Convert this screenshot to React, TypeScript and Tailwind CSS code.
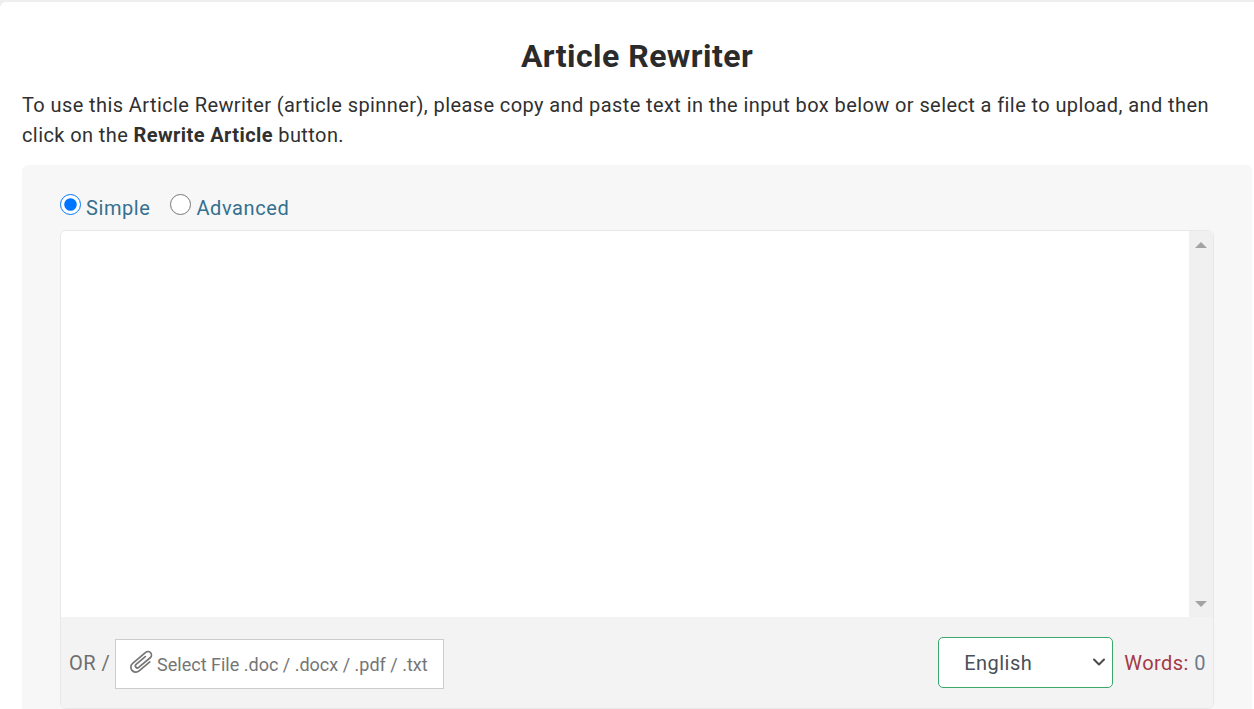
import { ChevronDown } from 'lucide-react';

function ClipIcon() {
  return (
    <svg width="24" height="24" viewBox="0 0 24 24" fill="none" stroke="currentColor" strokeWidth="1.7" strokeLinecap="round" className="mb-[4px] mr-[3px] shrink-0">
      <g transform="rotate(50 12 12)">
        <path d="M17 6 V20 a5 5 0 0 1 -10 0 V3 a3.5 3.5 0 0 1 7 0 V18 a2 2 0 0 1 -4 0 V6" />
      </g>
    </svg>
  );
}

export default function App() {
  return (
    <div className="h-[709px] overflow-hidden bg-[#eeeeee] pt-[2px] font-['Roboto',sans-serif] text-[#2b2b2b]">
      <div className="h-full rounded-tl-[6px] bg-white pl-[22px] pr-[2px]">
        <h1 className="pt-[33px] text-center text-[32px] font-bold leading-[42px] tracking-[0.45px]">Article Rewriter</h1>
        <p className="mt-[13px] text-[20px] leading-[30px] tracking-[0.405px] text-[#303030]">
          To use this Article Rewriter (article spinner), please copy and paste text in the input box below or select a file to upload, and then click on the <strong className="font-bold">Rewrite Article</strong> button.
        </p>
        <div className="mt-[15px] h-[560px] rounded-[6px] bg-[#f7f7f7] pl-[38px] pr-[38px] pt-[28px]">
          {/* Mode radios */}
          <div className="flex h-[37px] items-start text-[20px] leading-[30px] tracking-[0.58px] text-[#35708f]">
            <label className="flex items-start">
              <input type="radio" name="mode" defaultChecked className="h-[21px] w-[21px]" style={{ margin: '1px 5px 0 0' }} />
              <span>Simple</span>
            </label>
            <label className="ml-[20px] flex items-start">
              <input type="radio" name="mode" className="h-[21px] w-[21px]" style={{ margin: '1px 5px 0 0' }} />
              <span>Advanced</span>
            </label>
          </div>

          {/* Editor */}
          <div className="h-[479px] overflow-hidden rounded-[6px] border border-[#e8e8e8]">
            <div className="flex h-[386px] bg-white">
              <div className="flex-1" />
              <div className="flex w-[24px] flex-col items-center justify-between bg-[#f0f0f0] pb-[10px] pt-[11px]">
                <div className="h-0 w-0 border-x-[6px] border-b-[6px] border-x-transparent border-b-[#a3a3a3]" />
                <div className="h-0 w-0 border-x-[6px] border-t-[6px] border-x-transparent border-t-[#a3a3a3]" />
              </div>
            </div>

            {/* Footer */}
            <div className="flex h-[92px] items-start justify-between bg-[#f3f3f3] pl-[8px] pr-[7px]">
              <div className="mt-[22px] flex items-center">
                <span className="self-start text-[20px] leading-[48px] tracking-[0.45px] text-[#6f6f6f]">OR /</span>
                <div className="ml-[5px] flex h-[50px] w-[329px] items-center border border-[#cccccc] bg-white pl-[14px] text-[#757575]">
                  <ClipIcon />
                  <span className="pt-[2px] text-[18px] leading-[24px]">Select File .doc / .docx / .pdf / .txt</span>
                </div>
              </div>
              <div className="mt-[20px] flex items-start">
                <div className="relative h-[51px] w-[175px] rounded-[5px] border border-[#3aa76d] bg-white">
                  <select className="block h-full w-full appearance-none bg-transparent pl-[25px] text-[20px] tracking-[0.45px] text-[#495057] outline-none">
                    <option>English</option>
                  </select>
                  <ChevronDown size={20} strokeWidth={2.4} className="pointer-events-none absolute right-[3px] top-[14px] text-[#4a4a4a]" />
                </div>
                <span className="ml-[11px] text-[20px] leading-[53px] tracking-[0.45px] text-[#a33a46]">
                  Words: <span className="text-[#6b7b8c]">0</span>
                </span>
              </div>
            </div>
          </div>
        </div>
      </div>
    </div>
  );
}
